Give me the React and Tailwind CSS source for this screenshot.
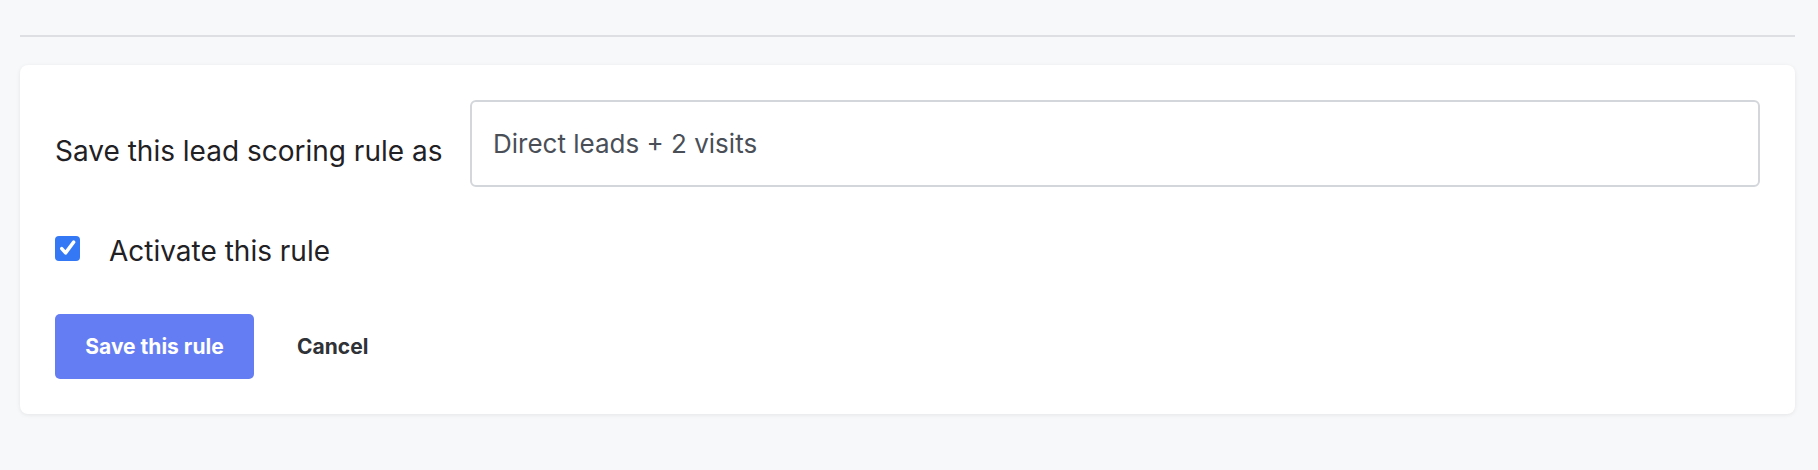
import React from "react";

export default function App() {
  return (
    <div className="min-h-[470px] w-full bg-[#f7f8fa] pl-5 pr-[23px] pt-[35px] pb-[57px]" style={{ fontFamily: "Inter, 'Noto Sans', sans-serif" }}>
      <div className="h-[2px] w-full bg-[#dddfe2]" />
      <div className="mt-[28px] rounded-lg bg-white p-[35px] shadow-[0_1px_4px_rgba(0,0,0,0.08)]">
        <div className="flex items-center">
          <label className="w-[415px] shrink-0 pt-[14px] text-[28px] leading-[34px] text-[#1f2124]">Save this lead scoring rule as</label>
          <div className="flex h-[87px] flex-1 items-center rounded-md border-2 border-[#d3d6da] px-[21px] text-[26px] text-[#4a4f57]">
            Direct leads + 2 visits
          </div>
        </div>
        <div className="mt-[45px] flex h-[32px] items-center">
          <span className="flex h-[25px] w-[25px] items-center justify-center rounded-[4px] bg-[#3478f6]">
            <svg width="22" height="22" viewBox="0 0 20 20" fill="none">
              <path d="M4.3 10.6 L7.8 14.4 L15.2 4.6" stroke="white" strokeWidth="3.2" strokeLinecap="round" strokeLinejoin="round" />
            </svg>
          </span>
          <span className="ml-[29px] pt-[6px] text-[28px] leading-[34px] text-[#1f2124]">Activate this rule</span>
        </div>
        <div className="mt-[50px] flex items-center">
          <button className="flex h-[65px] w-[199px] items-center justify-center rounded-[5px] bg-[#657df2] text-[21px] font-bold text-white">
            Save this rule
          </button>
          <button className="ml-[43px] text-[21px] font-bold text-[#2f3237]">Cancel</button>
        </div>
      </div>
    </div>
  );
}
